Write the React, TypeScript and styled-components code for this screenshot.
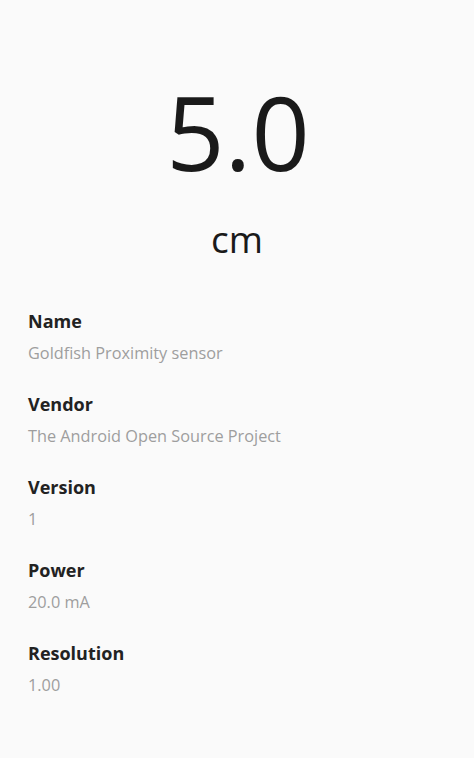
import React from "react";
import styled, { createGlobalStyle } from "styled-components";

const GlobalStyle = createGlobalStyle`
  html, body {
    margin: 0;
    padding: 0;
    background: #fafafa;
  }
  body {
    font-family: "Open Sans", "Noto Sans", sans-serif;
    -webkit-font-smoothing: antialiased;
  }
`;

const Screen = styled.div`
  width: 474px;
  min-height: 758px;
  background: #fafafa;
  display: flex;
  flex-direction: column;
  box-sizing: border-box;
`;

const Reading = styled.div`
  display: flex;
  flex-direction: column;
  align-items: center;
  padding-top: 62px;
`;

const Value = styled.div`
  font-size: 102px;
  line-height: 139px;
  font-weight: 400;
  color: #1a1a1a;
  margin-left: 2px;
`;

const Unit = styled.div`
  font-size: 37px;
  line-height: 50px;
  color: #1a1a1a;
  margin-top: 13px;
`;

const Details = styled.dl`
  margin: 45px 0 0;
  padding: 0 28px;
  display: flex;
  flex-direction: column;
  gap: 28px;
`;

const Item = styled.div`
  display: flex;
  flex-direction: column;
  gap: 9px;
`;

const Label = styled.dt`
  font-size: 18px;
  line-height: 24px;
  font-weight: 700;
  color: #222222;
`;

const Info = styled.dd`
  margin: 0;
  font-size: 16.3px;
  line-height: 22px;
  color: #9e9e9e;
`;

const rows: [string, string][] = [
  ["Name", "Goldfish Proximity sensor"],
  ["Vendor", "The Android Open Source Project"],
  ["Version", "1"],
  ["Power", "20.0 mA"],
  ["Resolution", "1.00"],
];

export default function App() {
  return (
    <Screen>
      <GlobalStyle />
      <Reading>
        <Value>5.0</Value>
        <Unit>cm</Unit>
      </Reading>
      <Details>
        {rows.map(([label, info]) => (
          <Item key={label}>
            <Label>{label}</Label>
            <Info>{info}</Info>
          </Item>
        ))}
      </Details>
    </Screen>
  );
}
